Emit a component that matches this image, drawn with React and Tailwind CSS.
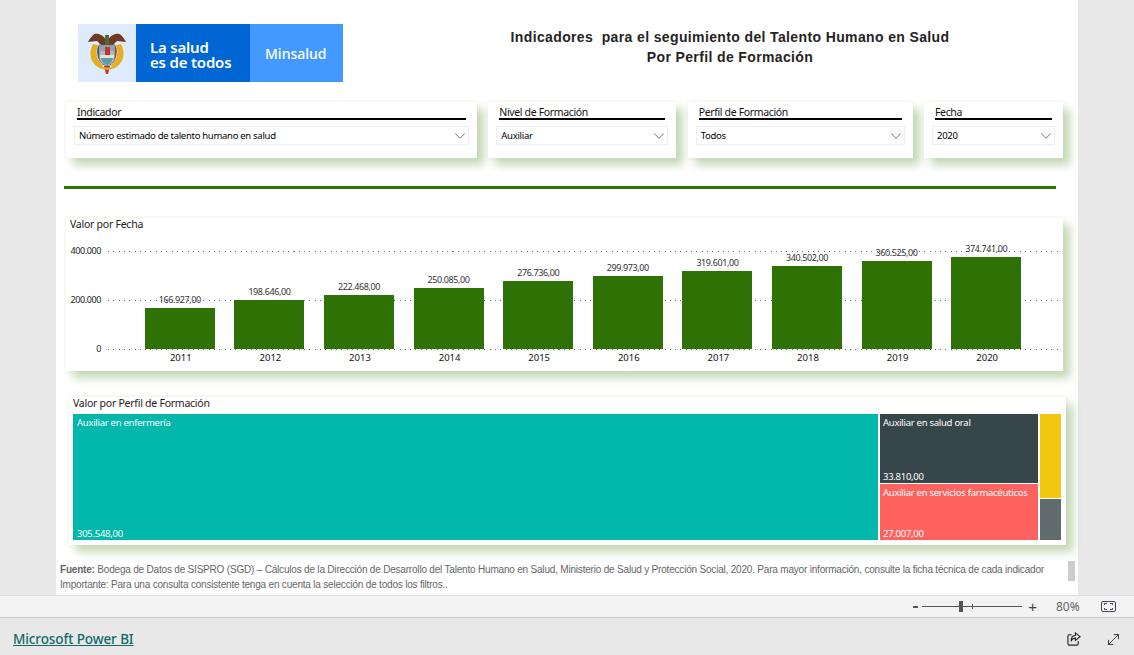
import React from "react";
import { ChevronDown, MoveDiagonal } from "lucide-react";

const UI = "font-['Noto_Sans',sans-serif]";

const slicers = [
  { title: "Indicador", value: "Número estimado de talento humano en salud", w: "w-[411px]" },
  { title: "Nivel de Formación", value: "Auxiliar", w: "w-[188px]" },
  { title: "Perfil de Formación", value: "Todos", w: "w-[225px]" },
  { title: "Fecha", value: "2020", w: "w-[139px]" },
];

const bars = [
  { year: "2011", value: 166927, label: "166.927,00" },
  { year: "2012", value: 198646, label: "198.646,00" },
  { year: "2013", value: 222468, label: "222.468,00" },
  { year: "2014", value: 250085, label: "250.085,00" },
  { year: "2015", value: 276736, label: "276.736,00" },
  { year: "2016", value: 299973, label: "299.973,00" },
  { year: "2017", value: 319601, label: "319.601,00" },
  { year: "2018", value: 340502, label: "340.502,00" },
  { year: "2019", value: 360525, label: "360.525,00" },
  { year: "2020", value: 374741, label: "374.741,00" },
];

const cardShadow = "shadow-[7px_7px_9px_#c3d7b5,0_0_5px_#eaf2e4]";

const CoatOfArms = () => (
  <svg width="38" height="42" viewBox="0 0 38 42">
    {/* wings */}
    <path d="M19 9 C15 2 8 0 5 3 C3 5 1 8 0 10 L9 9 L13 13 L19 13 Z" fill="#6f3a24" />
    <path d="M19 9 C23 2 30 0 33 3 C35 5 37 8 38 10 L29 9 L25 13 L19 13 Z" fill="#6f3a24" />
    <path d="M17 3 L21 3 L21 13 L17 13 Z" fill="#4f6b3a" />
    {/* mantling */}
    <path d="M5 12 C0 21 2 32 13 37 L15 33 C9 29 7 21 10 13 Z" fill="#e5ad1f" />
    <path d="M33 12 C38 21 36 32 25 37 L23 33 C29 29 31 21 28 13 Z" fill="#e5ad1f" />
    <path d="M10 14 C8 21 10 28 14 31 L15 29 C12 26 11 20 12 15 Z" fill="#27508f" />
    <path d="M28 14 C30 21 28 28 24 31 L23 29 C26 26 27 20 26 15 Z" fill="#b8342c" />
    {/* shield */}
    <path d="M11 13 L27 13 L27 25 C27 30 23 33 19 34 C15 33 11 30 11 25 Z" fill="#a9bcc4" stroke="#5b6a5e" strokeWidth="0.8" />
    <path d="M12 14 H26 V19 H12 Z" fill="#8fa3b3" />
    <path d="M17 15 H22 V23 H17 Z" fill="#c2332e" />
    <path d="M12 23 H26 V26 H12 Z" fill="#e3e4c9" />
    <path d="M13 26 H25 C24 30 22 32 19 33 C16 32 14 30 13 26 Z" fill="#5d9bab" />
    {/* ribbon */}
    <path d="M16 34 L22 34 L20 42 L18 42 Z" fill="#c2332e" />
    <path d="M12 34 C15 36 23 36 26 34 L24 37 C21 38 17 38 14 37 Z" fill="#e5ad1f" />
  </svg>
);

const Logo = () => (
  <div className={`flex h-[58px] w-[265px] shrink-0 text-white ${UI}`}>
    <div className="flex w-[58px] items-center justify-center bg-[#deebfd]">
      <CoatOfArms />
    </div>
    <div className="flex w-[114px] flex-col justify-center pl-[14px] pt-[4px] text-[15px] leading-[15px] font-semibold tracking-[-0.2px] bg-[#0066d4]">
      <span>La salud</span>
      <span>es de todos</span>
    </div>
    <div className="flex flex-1 items-center pl-[15px] text-[14px] font-medium bg-[#4499ff]">Minsalud</div>
  </div>
);

const Slicer = ({ title, value, w }) => (
  <div className={`h-[56px] bg-white px-2 ${w} ${cardShadow}`}>
    <div className="mx-[3px] h-[18px] border-b-2 border-black text-[10.5px] leading-[20px] tracking-[-0.35px] text-[#111]">{title}</div>
    <div className="mt-[6px] flex h-[19px] items-center justify-between border border-[#eeeeee] pl-[4px] text-[9.5px] tracking-[-0.29px] text-black">
      <span className="pt-[2px]">{value}</span>
      <ChevronDown size={18} strokeWidth={1.1} color="#555" className="-mr-[1px]" />
    </div>
  </div>
);

const GridLine = ({ top }) => (
  <div className={`absolute inset-x-0 h-px bg-[repeating-linear-gradient(to_right,#666_0,#666_1px,transparent_1px,transparent_5.3px)] ${top}`} />
);

const BarChart = () => (
  <div className={`ml-[10px] h-[153px] w-[997px] bg-white ${cardShadow}`}>
    <div className="pl-[4px] text-[10.5px] leading-[13px] tracking-[-0.25px] text-[#222]">Valor por Fecha</div>
    <div className="flex">
      <div className="mt-[13px] flex h-[111px] w-[35px] flex-col items-end justify-between text-[9px] leading-[13px] tracking-[-0.4px] text-[#222]">
        <span>400.000</span>
        <span>200.000</span>
        <span>0</span>
      </div>
      <div className="relative ml-[7px] h-[135px] w-[953px]">
        <GridLine top="top-[20px]" />
        <GridLine top="top-[69px]" />
        <GridLine top="top-[118px]" />
        <div className="absolute left-[27px] top-0 grid h-[118px] w-[896px] grid-cols-10 items-end">
          {bars.map((b) => (
            <div key={b.year} className="flex flex-col items-center">
              <span className="mb-[2px] text-[9px] leading-[13px] tracking-[-0.4px] text-[#333]">{b.label}</span>
              <div className="w-[70px] bg-[#2e7206]" style={{ height: (b.value / 400000) * 98 }} />
            </div>
          ))}
        </div>
        <div className="absolute left-[28px] top-[120px] grid w-[896px] grid-cols-10 text-center text-[9.5px] leading-[13px] text-[#111]">
          {bars.map((b) => (
            <span key={b.year}>{b.year}</span>
          ))}
        </div>
      </div>
    </div>
  </div>
);

const Tile = ({ name, value, className }) => (
  <div className={`flex flex-col justify-between whitespace-nowrap pr-[3px] pt-[2px] text-[9.5px] leading-[13px] tracking-[-0.27px] text-white ${className}`}>
    <span>{name}</span>
    <span>{value}</span>
  </div>
);

const Treemap = () => (
  <div className={`ml-[13px] flex h-[148px] w-[997px] flex-col bg-white px-[4px] ${cardShadow}`}>
    <div className="h-[17px] text-[10.5px] leading-[13px] tracking-[-0.25px] text-[#222]">Valor por Perfil de Formación</div>
    <div className="flex h-[126px] gap-[2px]">
      <Tile name="Auxiliar en enfermería" value="305.548,00" className="w-[805px] pl-[4px] bg-[#01b8aa]" />
      <div className="flex w-[158px] flex-col gap-[1px]">
        <Tile name="Auxiliar en salud oral" value="33.810,00" className="h-[69px] pl-[3px] bg-[#374649]" />
        <Tile name="Auxiliar en servicios farmacéuticos" value="27.007,00" className="flex-1 pl-[3px] bg-[#fd625e]" />
      </div>
      <div className="flex w-[21px] flex-col gap-[1px]">
        <div className="h-[84px] bg-[#f2c80f]" />
        <div className="flex-1 bg-[#5f6b6d]" />
      </div>
    </div>
  </div>
);

const ZoomBar = () => (
  <div className="flex h-[23px] items-center justify-end bg-[#f3f3f3] border-t border-[#e0e0e0] border-b border-b-[#c8c8c8]">
    <span className="h-[2px] w-[5px] bg-[#555]" />
    <div className="relative ml-[4px] h-px w-[100px] bg-[#555]">
      <span className="absolute left-[37px] -top-[5px] h-[11px] w-[4px] bg-[#555]" />
      <span className="absolute left-[50px] -top-[2px] h-[5px] w-px bg-[#555]" />
    </div>
    <span className="ml-[6px] text-[15px] leading-none text-[#444] font-['Liberation_Sans',sans-serif]">+</span>
    <span className={`ml-[19px] w-[24px] text-[12px] text-[#666] ${UI}`}>80%</span>
    <svg className="ml-[21px] mr-[18px]" width="15" height="11" viewBox="0 0 15 11" fill="none" stroke="#445">
      <rect x="0.5" y="0.5" width="14" height="10" rx="1.5" />
      <path d="M3.5 4V2.5H6M9 2.5H11.5V4M11.5 7V8.5H9M6 8.5H3.5V7" />
    </svg>
  </div>
);

const App = () => {
  return (
    <div className={`flex h-[655px] w-[1134px] flex-col overflow-hidden bg-[#e8e8e8] ${UI}`}>
      <div className="mx-[56px] h-[595px] shrink-0 bg-white">
        {/* Header */}
        <div className="flex h-[81px] items-start pl-[22px] pt-[24px]">
          <Logo />
          <div className="ml-[140px] mt-[3px] w-[494px] shrink-0 text-center text-[14px] leading-[20px] font-bold tracking-[0.37px] text-[#252423] font-['Liberation_Sans',sans-serif]">
            <div className="whitespace-pre">Indicadores  para el seguimiento del Talento Humano en Salud</div>
            <div>Por Perfil de Formación</div>
          </div>
        </div>

        {/* Filtros */}
        <div className="ml-[10px] mt-[21px] flex gap-[11.33px]">
          {slicers.map((s) => (
            <Slicer key={s.title} {...s} />
          ))}
        </div>

        <div className="ml-[8px] mt-[28px] h-[3px] w-[992px] bg-[#2e7206]" />

        <div className="mt-[29px]">
          <BarChart />
        </div>
        <div className="mt-[26px]">
          <Treemap />
        </div>

        {/* Fuente */}
        <div className="flex justify-between pl-[4px] pr-[3px] pt-[16px] font-['Liberation_Sans',sans-serif] text-[10px] leading-[15px] tracking-[-0.195px] text-[#666666]">
          <div className="whitespace-nowrap pt-[1px]">
            <div>
              <span className="font-bold">Fuente:</span> Bodega de Datos de SISPRO (SGD) – Cálculos de la Dirección de Desarrollo del Talento Humano en Salud, Ministerio de Salud y Protección Social, 2020. Para mayor información, consulte la ficha técnica de cada indicador
            </div>
            <div>Importante: Para una consulta consistente tenga en cuenta la selección de todos los filtros..</div>
          </div>
          <div className="h-[20px] w-[7px] bg-[#cccccc]" />
        </div>
      </div>

      <ZoomBar />

      {/* Pie */}
      <div className="flex flex-1 items-center justify-between pl-[13px] pr-[12px] pt-[5px]">
        <a href="#" className="text-[13.5px] font-medium tracking-[-0.1px] text-[#11686b] underline">Microsoft Power BI</a>
        <div className="flex items-center gap-[24px]">
          <svg width="14" height="14" viewBox="0 0 15 15" fill="none" stroke="#222" strokeWidth="1.2">
            <path d="M5 3H2.5C1.7 3 1 3.7 1 4.5V12.5C1 13.3 1.7 14 2.5 14H10.5C11.3 14 12 13.3 12 12.5V10" />
            <path d="M9 1L14 5L9 9V6.5C6.5 6.5 5 8 4.5 10C4.3 6.5 6 3.8 9 3.5Z" />
          </svg>
          <MoveDiagonal size={17} strokeWidth={1.2} color="#222" />
        </div>
      </div>
    </div>
  );
};

export default App;
